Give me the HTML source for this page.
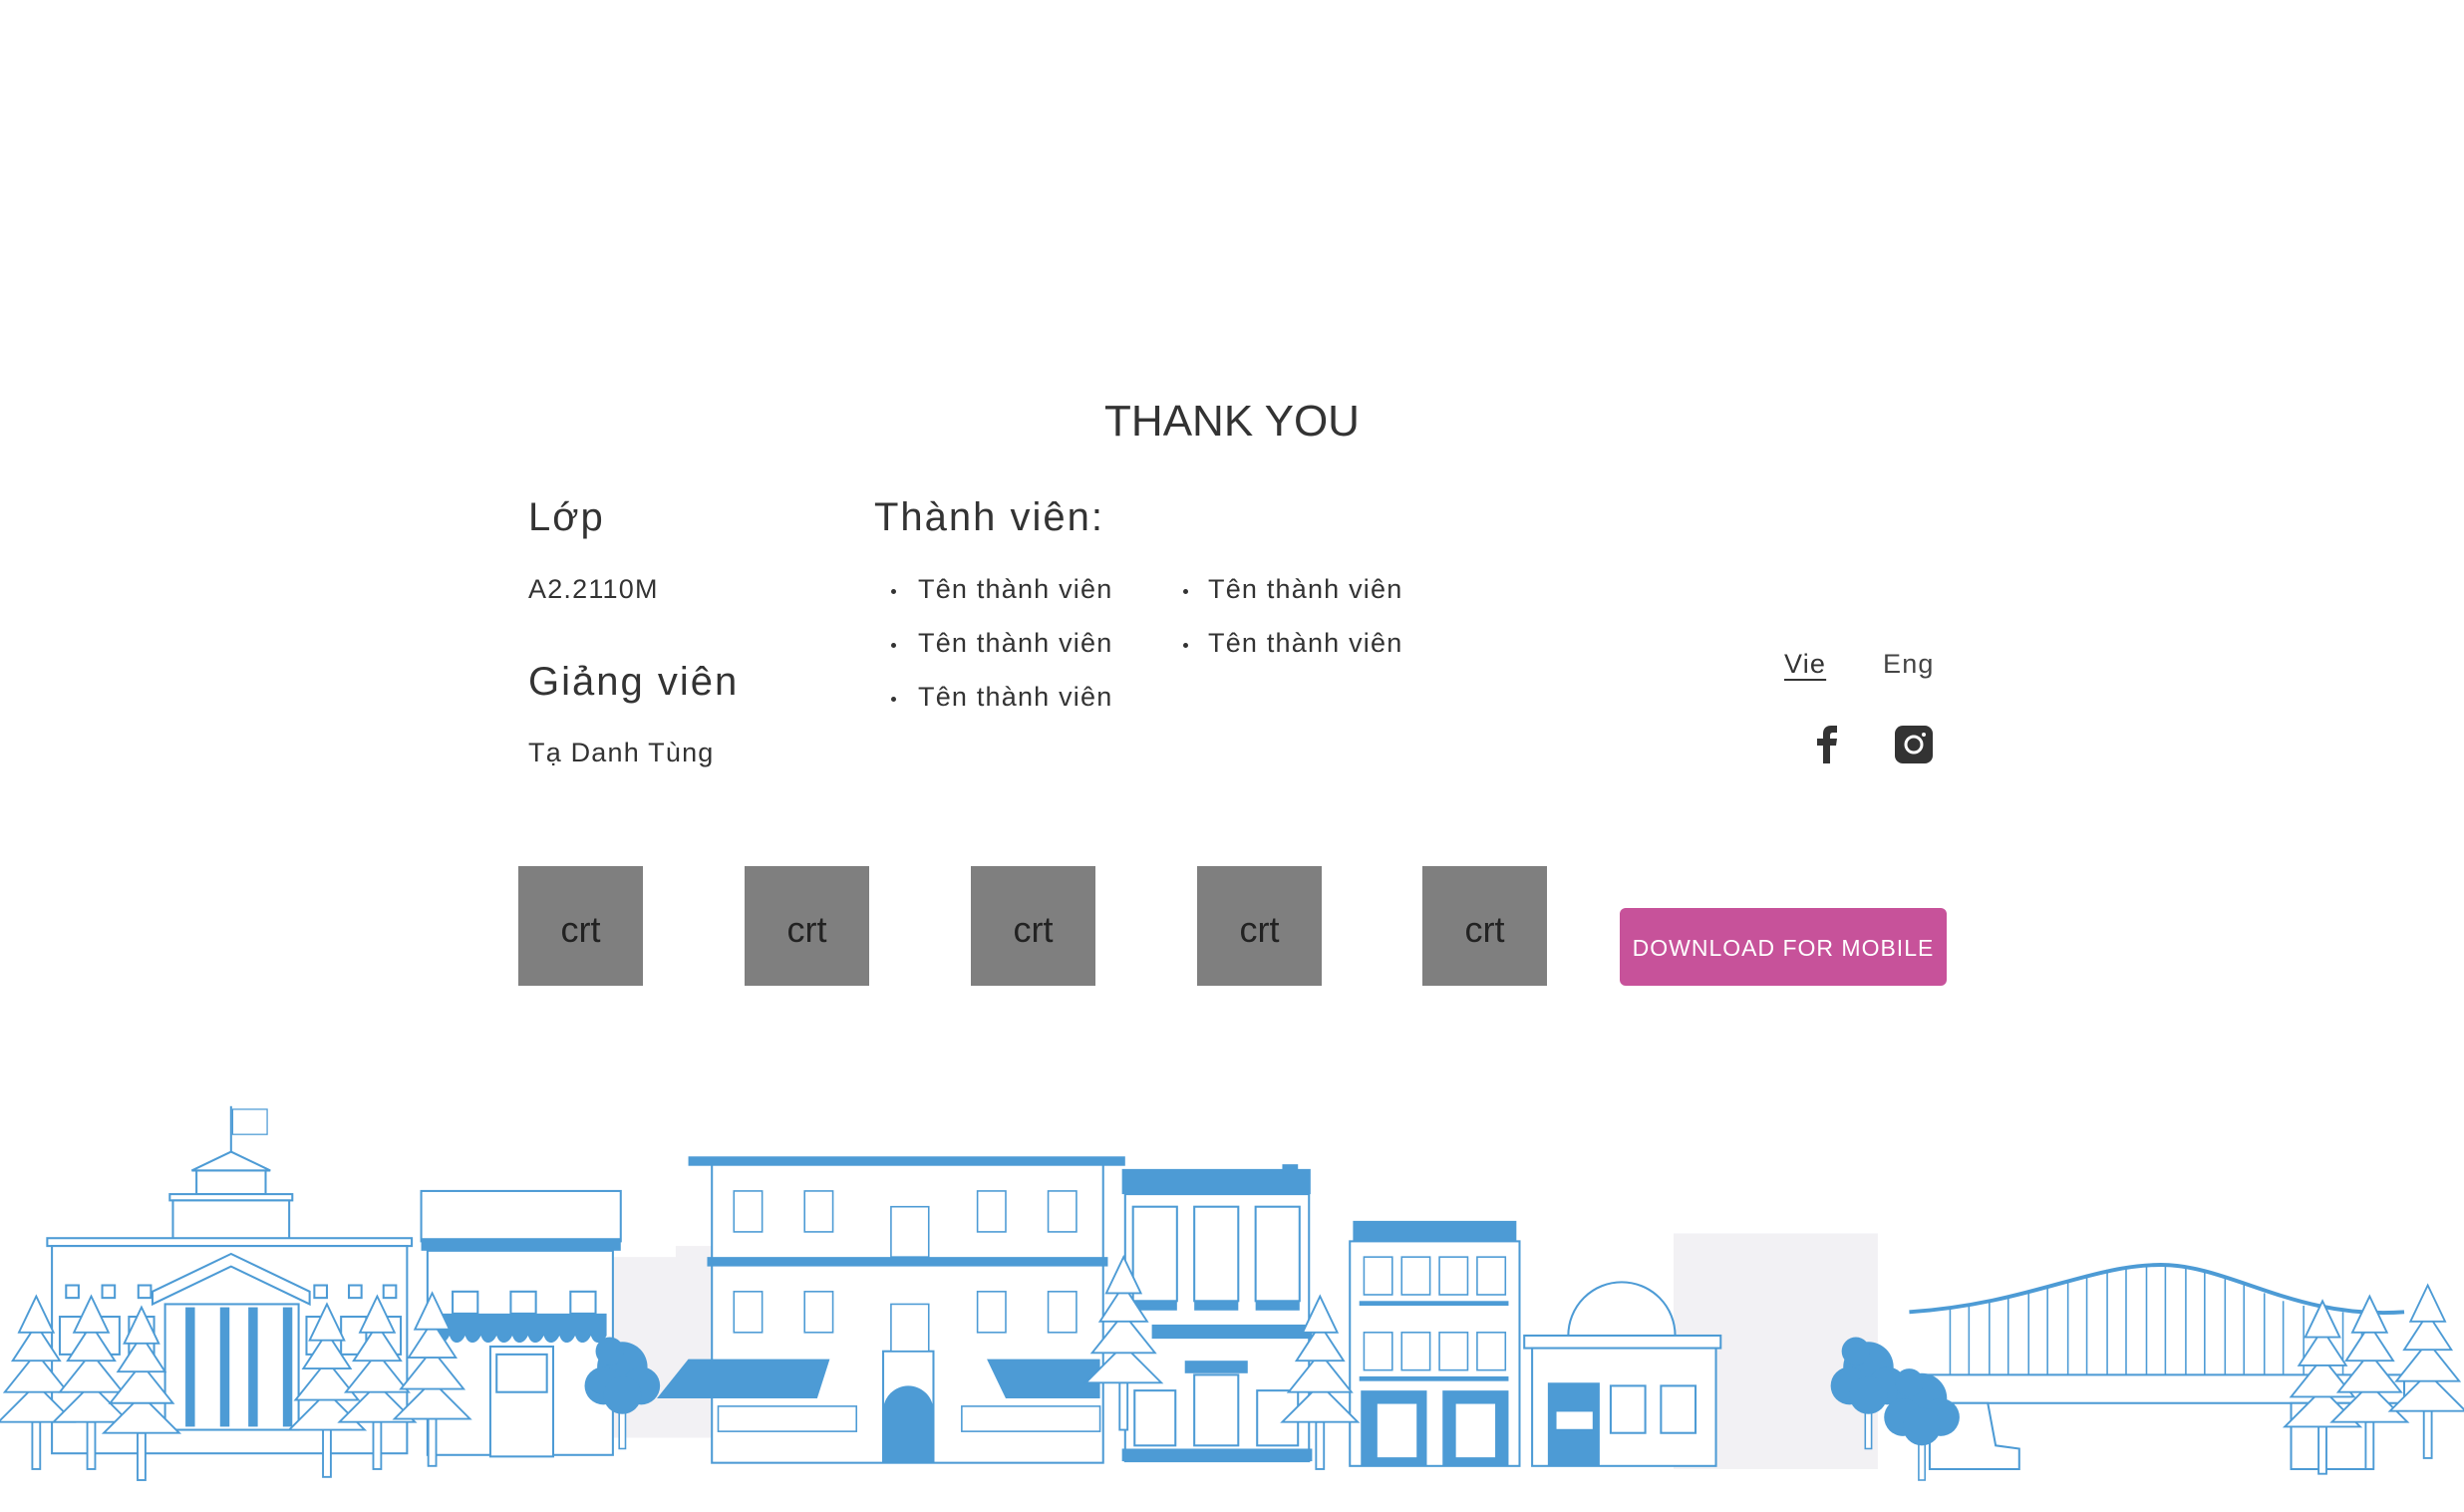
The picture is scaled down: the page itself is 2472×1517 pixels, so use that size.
<!DOCTYPE html>
<html><head><meta charset="utf-8">
<style>
html,body{margin:0;padding:0;background:#fff;}
body{width:2472px;height:1517px;position:relative;overflow:hidden;font-family:"Liberation Sans","DejaVu Sans",sans-serif;color:#333;}
.a{position:absolute;white-space:nowrap;}
.h{font-size:40px;letter-spacing:2px;color:#333;}
.t{font-size:27px;color:#333;letter-spacing:1.2px;}
.crt{position:absolute;top:869px;width:125px;height:120px;background:#7f7f7f;color:#222;font-size:36px;text-align:center;line-height:128px;}
.dot{position:absolute;width:5px;height:5px;background:#333;border-radius:50%;}
</style></head><body>
<div class="a" style="left:0;width:2472px;top:398px;text-align:center;font-size:44px;letter-spacing:0px;color:#333;">THANK YOU</div>

<div class="a h" style="left:530px;top:497px;">Lớp</div>
<div class="a t" style="left:530px;top:576px;">A2.2110M</div>
<div class="a h" style="left:530px;top:662px;">Giảng viên</div>
<div class="a t" style="left:530px;top:740px;">Tạ Danh Tùng</div>

<div class="a h" style="left:877px;top:497px;">Thành viên:</div>
<div class="dot" style="left:894px;top:591px"></div><div class="a t" style="left:921px;top:576px;">Tên thành viên</div>
<div class="dot" style="left:894px;top:645px"></div><div class="a t" style="left:921px;top:630px;">Tên thành viên</div>
<div class="dot" style="left:894px;top:699px"></div><div class="a t" style="left:921px;top:684px;">Tên thành viên</div>
<div class="dot" style="left:1187px;top:591px"></div><div class="a t" style="left:1212px;top:576px;">Tên thành viên</div>
<div class="dot" style="left:1187px;top:645px"></div><div class="a t" style="left:1212px;top:630px;">Tên thành viên</div>

<div class="a t" style="left:1790px;top:651px;text-decoration:underline;text-underline-offset:6px;">Vie</div>
<div class="a t" style="left:1889px;top:651px;color:#444;">Eng</div>
<svg class="a" style="left:1823px;top:728px" width="20" height="38" viewBox="0 0 20 38"><path d="M6 38V20H0v-7h6V8c0-6 4-8 8-8h6v7h-4c-2 0-3 1-3 3v3h7l-1 7h-6v18z" fill="#333"/></svg>
<svg class="a" style="left:1901px;top:728px" width="38" height="38" viewBox="0 0 38 38"><rect width="38" height="38" rx="8" fill="#333"/><circle cx="19" cy="19" r="8" fill="none" stroke="#fff" stroke-width="3"/><circle cx="29" cy="9" r="2" fill="#fff"/></svg>

<div class="crt" style="left:520px">crt</div>
<div class="crt" style="left:747px">crt</div>
<div class="crt" style="left:974px">crt</div>
<div class="crt" style="left:1201px">crt</div>
<div class="crt" style="left:1427px">crt</div>
<div class="a" style="left:1625px;top:911px;width:328px;height:78px;background:#c7529a;border-radius:6px;color:#fff;font-size:23px;letter-spacing:1px;text-align:center;line-height:80px;">DOWNLOAD FOR MOBILE</div>

<svg class="a" style="left:0;top:0" width="2472" height="1517" viewBox="0 0 1568 962.3">
<defs>
<g id="pine" fill="#fff" stroke="#4d9bd5" stroke-width="1.2">
<rect x="-2.5" y="0" width="5" height="30"/>
<polygon points="0,-24 -24,0 24,0"/>
<polygon points="0,-44 -20,-19 20,-19"/>
<polygon points="0,-62 -15,-39 15,-39"/>
<polygon points="0,-80 -11,-57 11,-57"/>
</g>
<g id="tree">
<rect x="-2" y="10" width="4" height="30" fill="#fff" stroke="#4d9bd5"/>
<g fill="#4d9bd5"><circle cx="0" cy="-12" r="16"/><circle cx="-12" cy="0" r="12"/><circle cx="12" cy="0" r="12"/><circle cx="0" cy="6" r="12"/><circle cx="-8" cy="-22" r="9"/></g>
</g>
</defs>
<g fill="#f2f1f4"><rect x="390" y="800" width="65" height="115"/><rect x="430" y="793" width="25" height="10"/><rect x="1065" y="785" width="130" height="150"/></g>
<g fill="#fff" stroke="#4d9bd5" stroke-width="1.3">
<line x1="147" y1="704" x2="147" y2="733"/><rect x="148" y="706" width="22" height="16" stroke-width="0.8"/>
<polygon points="147,733 122,745 172,745"/><rect x="125" y="745" width="44" height="15"/>
<rect x="108" y="760" width="78" height="4"/><rect x="110" y="764" width="74" height="26"/>
<rect x="30" y="788" width="232" height="5"/><rect x="33" y="793" width="226" height="132"/>
<polygon points="147,798 97,822 97,830 147,806 197,830 197,822"/>
<rect x="105" y="830" width="85" height="80"/>
<rect x="38" y="838" width="16" height="24"/><rect x="60" y="838" width="16" height="24"/><rect x="82" y="838" width="16" height="24"/>
<rect x="195" y="838" width="16" height="24"/><rect x="217" y="838" width="16" height="24"/><rect x="239" y="838" width="16" height="24"/>
<rect x="42" y="818" width="8" height="8"/><rect x="65" y="818" width="8" height="8"/><rect x="88" y="818" width="8" height="8"/><rect x="200" y="818" width="8" height="8"/><rect x="222" y="818" width="8" height="8"/><rect x="244" y="818" width="8" height="8"/>
<rect x="268" y="758" width="127" height="32"/><rect x="272" y="796" width="118" height="130"/>
<rect x="288" y="822" width="16" height="14"/><rect x="325" y="822" width="16" height="14"/><rect x="363" y="822" width="16" height="14"/>
<rect x="312" y="857" width="40" height="70"/><rect x="316" y="862" width="32" height="24"/>
<rect x="453" y="741" width="249" height="190"/>
<rect x="562" y="860" width="32" height="70"/>
<rect x="716" y="760" width="117" height="170"/>
<rect x="721" y="768" width="28" height="60"/><rect x="760" y="768" width="28" height="60"/><rect x="799" y="768" width="28" height="60"/>
<rect x="760" y="875" width="28" height="45"/><rect x="800" y="885" width="26" height="35"/><rect x="722" y="885" width="26" height="35"/>
<rect x="859" y="790" width="108" height="143"/>
<path d="M998 850 A34 34 0 0 1 1066 850Z"/>
<rect x="970" y="850" width="125" height="8"/><rect x="975" y="858" width="117" height="75"/>
<rect x="1025" y="882" width="22" height="30"/><rect x="1057" y="882" width="22" height="30"/>
<rect x="1215" y="875" width="315" height="18"/>
<path d="M1228 893 L1265 893 L1270 920 L1285 922 L1285 935 L1228 935Z"/>
<path d="M1458 893 L1510 893 L1510 935 L1458 935Z"/>
</g>
<g fill="#4d9bd5">
<rect x="268" y="788" width="127" height="8"/>
<path d="M276 836h110v14c-3 6-8 6-10 0c-3 6-8 6-10 0c-3 6-8 6-10 0c-3 6-8 6-10 0c-3 6-8 6-10 0c-3 6-8 6-10 0c-3 6-8 6-10 0c-3 6-8 6-10 0c-3 6-8 6-10 0c-3 6-8 6-10 0c-3 6-8 6-10 0z"/>
<rect x="118" y="832" width="6" height="76"/><rect x="140" y="832" width="6" height="76"/><rect x="158" y="832" width="6" height="76"/><rect x="180" y="832" width="6" height="76"/>
<rect x="438" y="736" width="278" height="6"/><rect x="450" y="800" width="255" height="6"/>
<polygon points="438,865 528,865 520,890 418,890"/><polygon points="628,865 700,865 700,890 640,890"/>
<path d="M562 930V898a16 16 0 0 1 32 0v32z"/>
<rect x="714" y="744" width="120" height="16"/><rect x="816" y="741" width="10" height="5"/>
<rect x="733" y="843" width="102" height="9"/><rect x="714" y="922" width="121" height="8"/>
<rect x="721" y="828" width="28" height="6"/><rect x="760" y="828" width="28" height="6"/><rect x="799" y="828" width="28" height="6"/>
<rect x="754" y="866" width="40" height="8"/>
<rect x="861" y="777" width="104" height="13"/>
<rect x="866" y="885" width="42" height="48"/><rect x="918" y="885" width="42" height="48"/>
<rect x="865" y="828" width="95" height="3"/><rect x="865" y="876" width="95" height="3"/>
<rect x="985" y="880" width="33" height="53"/>
<path d="M1215 835 C1290 830 1330 805 1375 805 C1420 805 1460 840 1530 835" fill="none" stroke="#4d9bd5" stroke-width="2.5"/>
</g>
<g fill="#fff" stroke="#4d9bd5" stroke-width="1">
<rect x="876" y="893" width="26" height="35"/><rect x="926" y="893" width="26" height="35"/>
<rect x="990" y="898" width="24" height="12"/>
<rect x="467" y="758" width="18" height="26"/><rect x="512" y="758" width="18" height="26"/><rect x="567" y="768" width="24" height="32"/><rect x="622" y="758" width="18" height="26"/><rect x="667" y="758" width="18" height="26"/>
<rect x="467" y="822" width="18" height="26"/><rect x="512" y="822" width="18" height="26"/><rect x="567" y="830" width="24" height="30"/><rect x="622" y="822" width="18" height="26"/><rect x="667" y="822" width="18" height="26"/>
<rect x="457" y="895" width="88" height="16"/><rect x="612" y="895" width="88" height="16"/>
<rect x="868" y="800" width="18" height="24"/><rect x="892" y="800" width="18" height="24"/><rect x="916" y="800" width="18" height="24"/><rect x="940" y="800" width="18" height="24"/>
<rect x="868" y="848" width="18" height="24"/><rect x="892" y="848" width="18" height="24"/><rect x="916" y="848" width="18" height="24"/><rect x="940" y="848" width="18" height="24"/>
</g>
<g stroke="#4d9bd5" stroke-width="1">
<line x1="1241" y1="833" x2="1241" y2="875"/><line x1="1253" y1="831" x2="1253" y2="875"/><line x1="1266" y1="829" x2="1266" y2="875"/><line x1="1278" y1="826" x2="1278" y2="875"/><line x1="1291" y1="823" x2="1291" y2="875"/><line x1="1303" y1="819" x2="1303" y2="875"/><line x1="1316" y1="815" x2="1316" y2="875"/><line x1="1328" y1="811" x2="1328" y2="875"/><line x1="1341" y1="808" x2="1341" y2="875"/><line x1="1353" y1="806" x2="1353" y2="875"/><line x1="1366" y1="805" x2="1366" y2="875"/><line x1="1378" y1="805" x2="1378" y2="875"/><line x1="1391" y1="806" x2="1391" y2="875"/><line x1="1403" y1="809" x2="1403" y2="875"/><line x1="1416" y1="813" x2="1416" y2="875"/><line x1="1428" y1="818" x2="1428" y2="875"/><line x1="1441" y1="823" x2="1441" y2="875"/><line x1="1453" y1="828" x2="1453" y2="875"/><line x1="1466" y1="831" x2="1466" y2="875"/><line x1="1478" y1="834" x2="1478" y2="875"/><line x1="1491" y1="835" x2="1491" y2="875"/><line x1="1503" y1="836" x2="1503" y2="875"/>
</g>
<use href="#pine" x="23" y="905"/><use href="#pine" x="58" y="905"/><use href="#pine" x="90" y="912"/>
<use href="#pine" x="208" y="910"/><use href="#pine" x="240" y="905"/><use href="#pine" x="275" y="903"/>
<use href="#pine" x="715" y="880"/><use href="#pine" x="840" y="905"/>
<use href="#pine" x="1478" y="908"/><use href="#pine" x="1508" y="905"/><use href="#pine" x="1545" y="898"/>
<use href="#tree" x="396" y="882"/><use href="#tree" x="1189" y="882"/><use href="#tree" x="1223" y="902"/>
</svg>
</body></html>
